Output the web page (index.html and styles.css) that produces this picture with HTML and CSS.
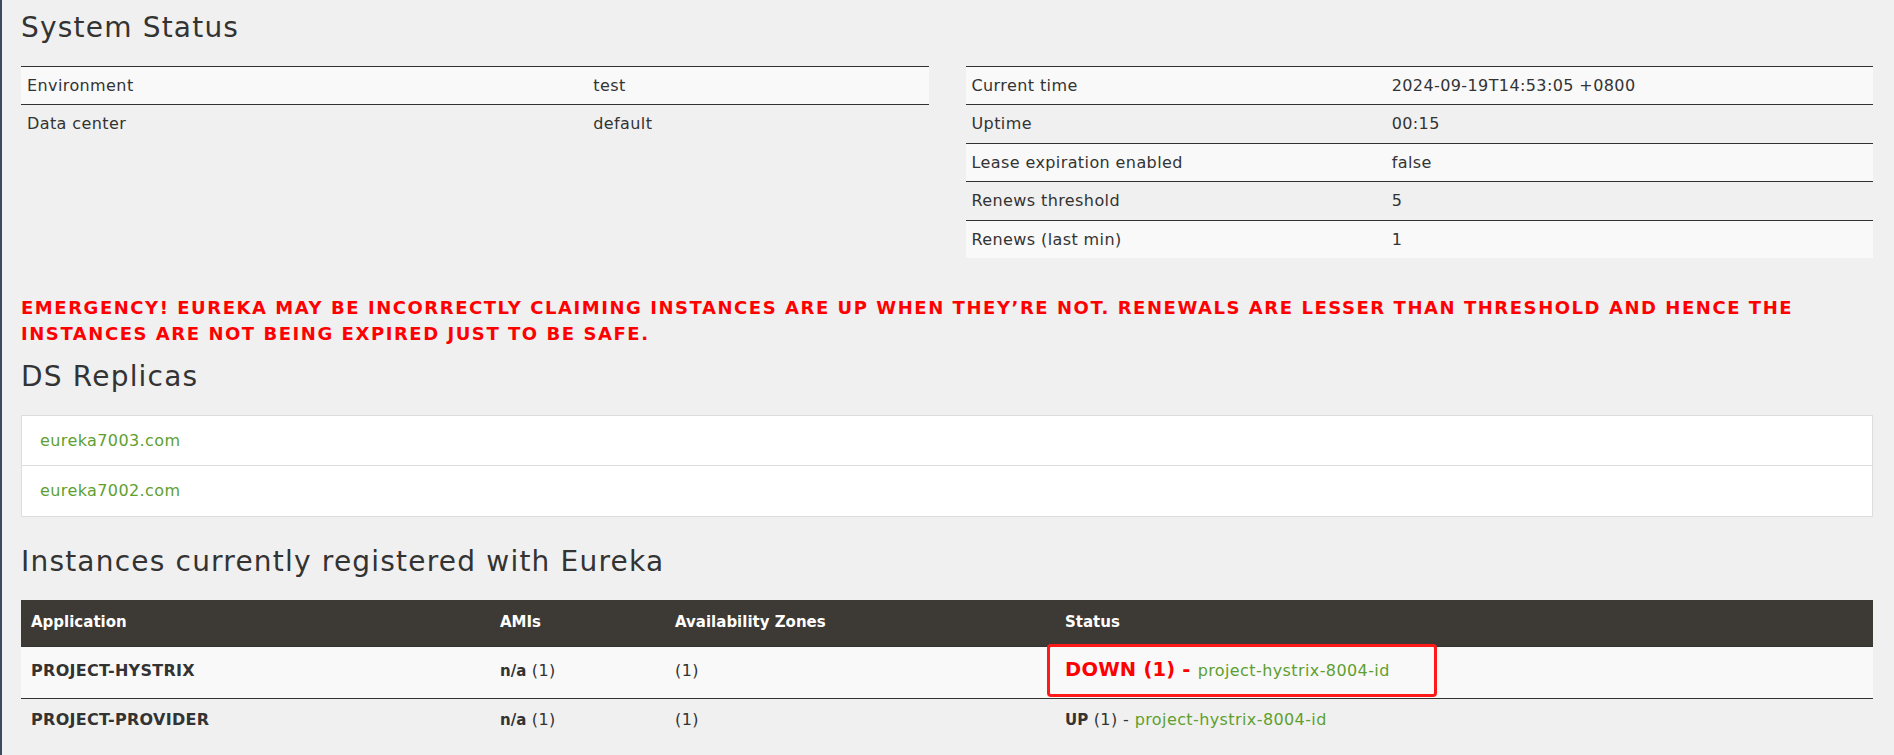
FILE: index.html
```html
<!DOCTYPE html>
<html lang="en">
<head>
<meta charset="utf-8">
<title>Eureka</title>
<link rel="stylesheet" href="styles.css">
</head>
<body>
<div class="page">
  <h1 class="section-title">System Status</h1>
  <div class="status-grid">
    <table class="kv-table kv-left">
      <tbody>
        <tr><td class="key">Environment</td><td>test</td></tr>
        <tr><td class="key">Data center</td><td>default</td></tr>
      </tbody>
    </table>
    <table class="kv-table kv-right">
      <tbody>
        <tr><td class="key">Current time</td><td>2024-09-19T14:53:05 +0800</td></tr>
        <tr><td class="key">Uptime</td><td>00:15</td></tr>
        <tr><td class="key">Lease expiration enabled</td><td>false</td></tr>
        <tr><td class="key">Renews threshold</td><td>5</td></tr>
        <tr><td class="key">Renews (last min)</td><td>1</td></tr>
      </tbody>
    </table>
  </div>

  <h4 class="emergency">EMERGENCY! EUREKA MAY BE INCORRECTLY CLAIMING INSTANCES ARE UP WHEN THEY’RE NOT. RENEWALS ARE LESSER THAN THRESHOLD AND HENCE THE INSTANCES ARE NOT BEING EXPIRED JUST TO BE SAFE.</h4>

  <h1 class="section-title">DS Replicas</h1>
  <ul class="replicas">
    <li class="replica"><a class="link" href="#">eureka7003.com</a></li>
    <li class="replica"><a class="link" href="#">eureka7002.com</a></li>
  </ul>

  <h1 class="section-title">Instances currently registered with Eureka</h1>
  <table class="instances">
    <colgroup>
      <col class="c-app"><col class="c-ami"><col class="c-az"><col class="c-status">
    </colgroup>
    <thead>
      <tr><th>Application</th><th>AMIs</th><th>Availability Zones</th><th>Status</th></tr>
    </thead>
    <tbody>
      <tr class="odd">
        <td><b class="app-name">PROJECT-HYSTRIX</b></td>
        <td><b class="strong">n/a</b> (1)</td>
        <td>(1)</td>
        <td class="status-cell"><span class="down">DOWN (1) - </span><a class="link" href="#">project-hystrix-8004-id</a><div class="mark"></div></td>
      </tr>
      <tr>
        <td><b class="app-name">PROJECT-PROVIDER</b></td>
        <td><b class="strong">n/a</b> (1)</td>
        <td>(1)</td>
        <td><b class="strong">UP</b> (1) - <a class="link" href="#">project-hystrix-8004-id</a></td>
      </tr>
    </tbody>
  </table>
</div>
</body>
</html>
```

FILE: styles.css
```css
html, body {
  margin: 0;
  padding: 0;
}
body {
  background: #f0f0f0;
  color: #333333;
  font-family: "DejaVu Sans", Verdana, sans-serif;
  font-size: 16px;
  letter-spacing: 0.4px;
  line-height: 21.4px;
  border-left: 2px solid #3b4a5e;
  min-height: 755px;
  box-sizing: border-box;
  overflow: hidden;
}
.page {
  padding: 11px 21px 0 19px;
}
.section-title {
  font-size: 28px;
  font-weight: normal;
  letter-spacing: 1.2px;
  line-height: 33px;
  margin: 0 0 22px;
  color: #333333;
}
.status-grid {
  display: grid;
  grid-template-columns: 1fr 1fr;
  column-gap: 37px;
  align-items: start;
}
.kv-table {
  width: 100%;
  border-collapse: collapse;
}
.kv-table td {
  border-top: 1px solid #333333;
  padding: 8px 6px;
  vertical-align: top;
}
.kv-table tr:nth-child(odd) td {
  background: #f9f9f9;
}
.kv-left .key { width: 62.4%; }
.kv-right .key { width: 46.3%; }

.emergency {
  margin: 37px 0 13px;
  color: #ff0000;
  font-size: 18px;
  font-weight: bold;
  letter-spacing: 1.55px;
  line-height: 26px;
}

.replicas {
  list-style: none;
  margin: 0 0 28px;
  padding: 0;
}
.replica {
  background: #ffffff;
  border: 1px solid #dddddd;
  padding: 14px 18px;
  line-height: 21.4px;
}
.replica + .replica {
  border-top: none;
}
.link {
  color: #5e9f2f;
  text-decoration: none;
}

.instances {
  width: 100%;
  border-collapse: collapse;
  table-layout: fixed;
}
.c-app { width: 469px; }
.c-ami { width: 175px; }
.c-az { width: 390px; }
.instances th {
  background: #3d3935;
  color: #ffffff;
  font-size: 15px;
  font-weight: bold;
  letter-spacing: 0;
  text-align: left;
  padding: 12px 10px 13px;
}
.instances td {
  border-top: 1px solid #333333;
  padding: 10px 10px;
  vertical-align: baseline;
}
.instances tr.odd td {
  background: #f9f9f9;
  padding: 7px 10px 13px;
}
.strong {
  font-size: 15px;
  font-weight: bold;
  letter-spacing: 0;
}
.app-name {
  font-size: 16px;
  font-weight: bold;
  letter-spacing: 0.3px;
}
.status-cell {
  position: relative;
}
.down {
  color: #ff0000;
  font-size: 19.5px;
  font-weight: bold;
  letter-spacing: 0.2px;
  line-height: 31px;
}
.mark {
  position: absolute;
  left: -8px;
  top: -3px;
  width: 390px;
  height: 53px;
  box-sizing: border-box;
  border: 3px solid #ff1a1a;
  border-radius: 4px;
  pointer-events: none;
}
```
